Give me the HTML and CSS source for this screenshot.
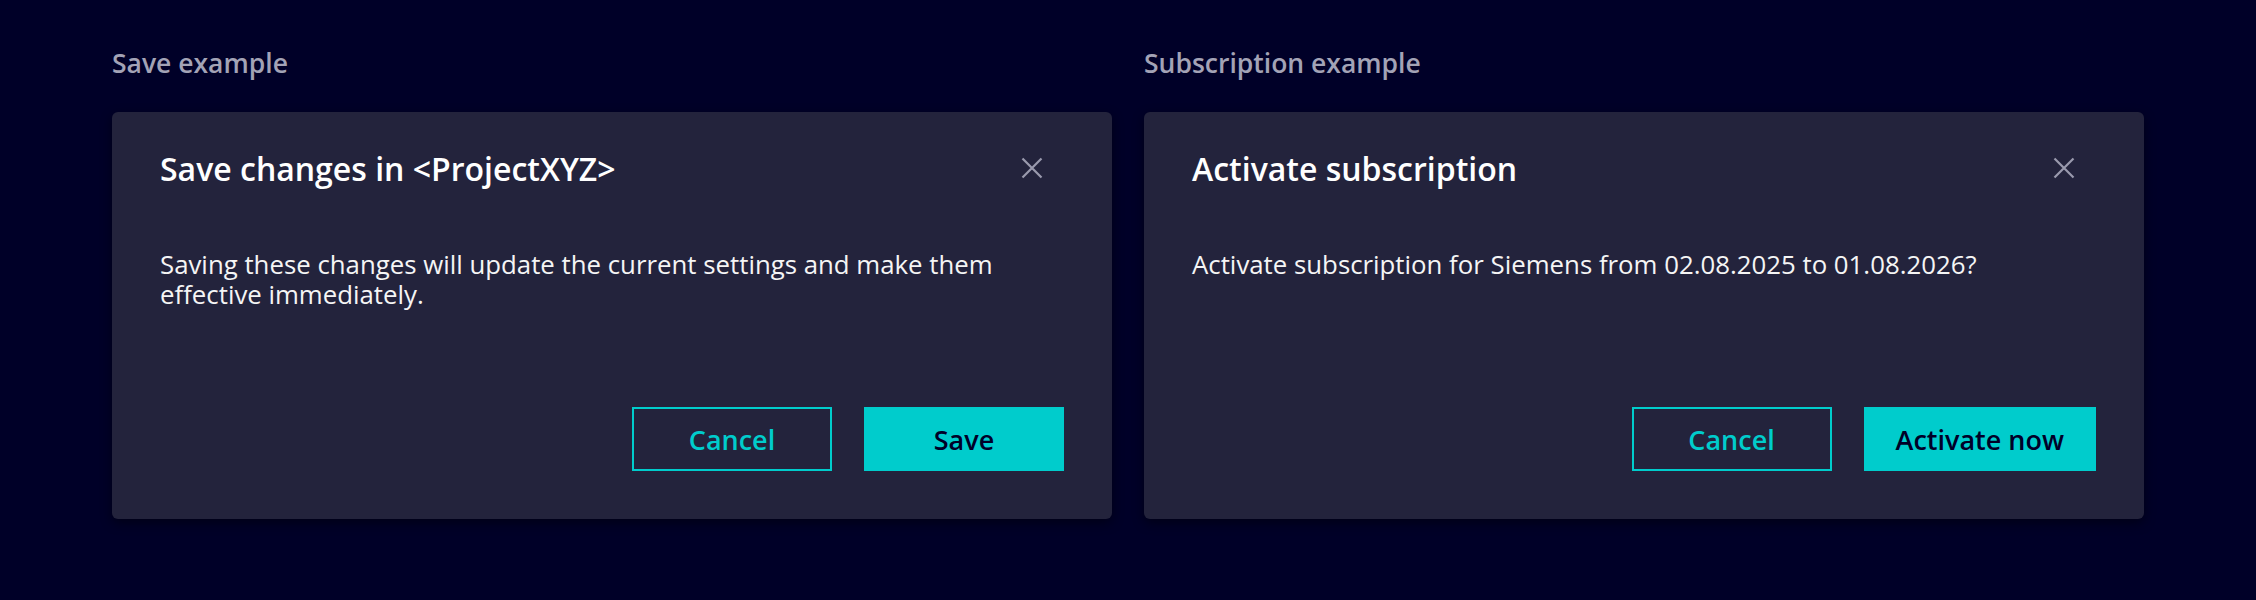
FILE: index.html
```html
<!DOCTYPE html>
<html lang="en">
<head>
  <meta charset="UTF-8" />
  <meta name="viewport" content="width=device-width, initial-scale=1" />
  <title>Message dialogs</title>
  <link rel="stylesheet" href="styles.css">
</head>
<body>
  <div class="examples">
    <section class="example">
      <h2 class="example-label">Save example</h2>
      <div class="dialog">
        <div class="dialog-header">
          <h3 class="dialog-title">Save changes in &lt;ProjectXYZ&gt;</h3>
          <button class="dialog-close" aria-label="Close">
            <svg viewBox="0 0 24 24" width="24" height="24"><path d="M2.5 2.5 L21.5 21.5 M21.5 2.5 L2.5 21.5" /></svg>
          </button>
        </div>
        <p class="dialog-content">Saving these changes will update the current settings and make them effective immediately.</p>
        <div class="dialog-footer">
          <button class="btn btn-outline">Cancel</button>
          <button class="btn btn-primary">Save</button>
        </div>
      </div>
    </section>

    <section class="example">
      <h2 class="example-label">Subscription example</h2>
      <div class="dialog">
        <div class="dialog-header">
          <h3 class="dialog-title">Activate subscription</h3>
          <button class="dialog-close" aria-label="Close">
            <svg viewBox="0 0 24 24" width="24" height="24"><path d="M2.5 2.5 L21.5 21.5 M21.5 2.5 L2.5 21.5" /></svg>
          </button>
        </div>
        <p class="dialog-content">Activate subscription for Siemens from 02.08.2025 to 01.08.2026?</p>
        <div class="dialog-footer">
          <button class="btn btn-outline">Cancel</button>
          <button class="btn btn-primary">Activate now</button>
        </div>
      </div>
    </section>
  </div>
</body>
</html>
```

FILE: styles.css
```css
body {
  margin: 0;
  padding: 0;
  background: #000028;
  font-family: 'Open Sans', 'Noto Sans', sans-serif;
  color: #f5f5f5;
}
.examples {
  display: grid;
  grid-template-columns: 1000px 1000px;
  column-gap: 32px;
  padding: 45px 112px 40px;
}
.example {
  display: flex;
  flex-direction: column;
}
.example-label {
  margin: 0 0 31px;
  font-size: 26.5px;
  line-height: 36px;
  font-weight: 600;
  color: #a3a3b6;
}
.dialog {
  flex: 1;
  display: flex;
  flex-direction: column;
  background: #23233c;
  border-radius: 6px;
  padding: 32px 48px 48px;
  box-shadow: 0 4px 12px rgba(0, 0, 0, 0.45);
}
.dialog-header {
  display: flex;
  align-items: center;
  justify-content: space-between;
  height: 48px;
}
.dialog-title {
  margin: 0;
  font-size: 32px;
  font-weight: 600;
  color: #fff;
}
.dialog-close {
  width: 48px;
  height: 48px;
  margin-right: 8px;
  padding: 0;
  border: none;
  background: none;
  display: flex;
  align-items: center;
  justify-content: center;
  cursor: pointer;
}
.dialog-close svg {
  width: 24px;
  height: 24px;
  fill: none;
  stroke: #9a9aae;
  stroke-width: 2.2;
}
.dialog-content {
  margin: 57px 0 0;
  font-size: 25.8px;
  line-height: 30px;
  color: #f5f5f5;
}
.dialog-footer {
  margin-top: auto;
  padding-top: 98px;
  display: flex;
  justify-content: flex-end;
  gap: 32px;
}
.btn {
  min-width: 200px;
  height: 64px;
  padding: 0 32px;
  font-family: inherit;
  font-size: 27px;
  font-weight: 600;
  border-radius: 0;
  cursor: pointer;
}
.btn-outline {
  background: transparent;
  border: 2px solid #00cccc;
  color: #00cccc;
}
.btn-primary {
  background: #00cccc;
  border: none;
  color: #000028;
}
```
